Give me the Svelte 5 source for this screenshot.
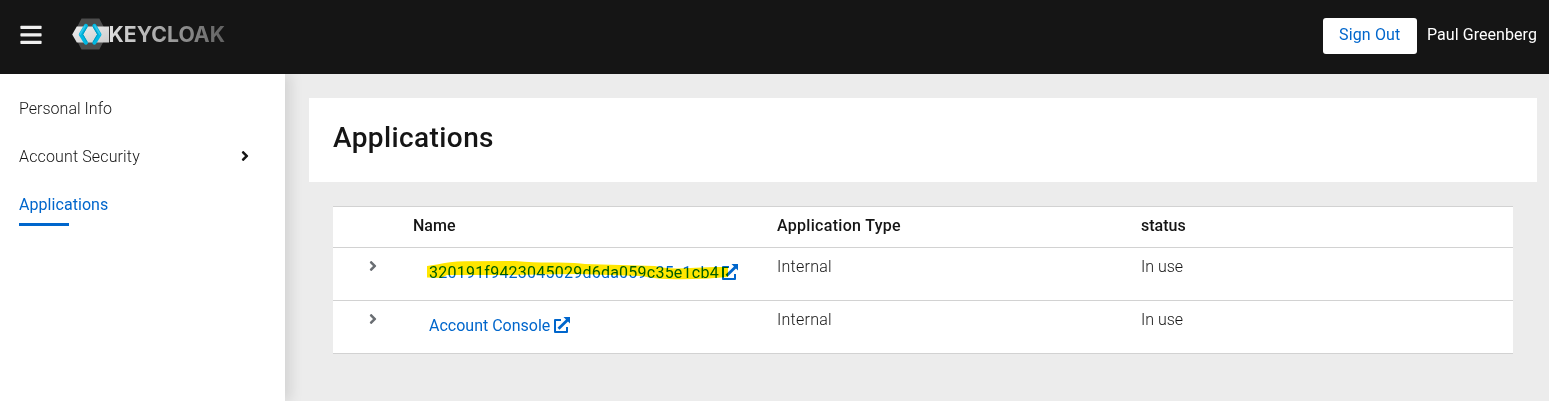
<script>
  const nav = [
    { label: 'Personal Info', cls: 'personal' },
    { label: 'Account Security', cls: 'security', expandable: true },
    { label: 'Applications', cls: 'current' }
  ];
  const apps = [
    { name: '320191f9423045029d6da059c35e1cb4', marked: true },
    { name: 'Account Console', marked: false }
  ];
</script>

{#snippet chevron()}
  <svg class="chevron" viewBox="0 0 256 512" aria-hidden="true">
    <path fill="currentColor" d="M224.3 273l-136 136c-9.4 9.4-24.6 9.4-33.9 0l-22.600-22.600c-9.400-9.400-9.400-24.600 0-33.900l96.400-96.400-96.400-96.400c-9.400-9.400-9.400-24.600 0-33.900L54.300 103c9.400-9.400 24.600-9.400 33.900 0l136 136c9.500 9.400 9.500 24.600.1 34z" />
  </svg>
{/snippet}

<div class="page">
  <header>
    <svg class="bars" viewBox="0 0 22 20" aria-hidden="true">
      <rect x="0.4" y="0.700" width="21.200" height="3.200" rx=".7" fill="#f0f0f0" />
      <rect x="0.4" y="8.200" width="21.200" height="3.200" rx=".7" fill="#f0f0f0" />
      <rect x="0.4" y="15.700" width="21.200" height="3.200" rx=".7" fill="#f0f0f0" />
    </svg>
    <svg class="logo" viewBox="0 0 154 34" role="img" aria-label="Keycloak">
      <defs>
        <linearGradient id="word" gradientUnits="userSpaceOnUse" x1="38" y1="0" x2="153" y2="0">
          <stop offset="0" stop-color="#dedede" />
          <stop offset="1" stop-color="#606060" />
        </linearGradient>
        <linearGradient id="band" x1="0" y1="0" x2="1" y2="1">
          <stop offset="0" stop-color="#ededed" />
          <stop offset="1" stop-color="#cdcdcd" />
        </linearGradient>
      </defs>
      <path fill="#4d4d4d" d="M9.500 1.500h17.800l8.200 15.500-8.200 15.500H9.500L1.500 17z" />
      <path fill="url(#band)" d="M4.800 9.500H37v16H4.800L.2 17.500z" />
      <path fill="none" stroke="#00b8e3" stroke-width="4" stroke-linecap="round" stroke-linejoin="round" d="M13.900 8.800L8.800 17.400l5.100 8.300M22.400 8.800l5.100 8.600-5.100 8.300" />
      <path fill="none" stroke="#33c6e9" stroke-width="1.500" stroke-linecap="round" d="M12.900 9L8 17.300M22.900 8.800l5.100 8.600" />
      <path fill="none" stroke="#009abf" stroke-width="1" d="M15.300 9.600L10.700 17.400l4.400 7.600M21 9.600l4.600 7.800-4.600 7.800" />
      <text x="36.500" y="25.300" textLength="116.500" lengthAdjust="spacingAndGlyphs" fill="url(#word)">KEYCLOAK</text>
    </svg>
    <button><span class="signout">Sign Out</span></button>
    <span class="user">Paul Greenberg</span>
  </header>

  <div class="body">
    <nav>
      {#each nav as item}
        <a href="#top" class={item.cls}>
          <span>{item.label}</span>
          {#if item.expandable}{@render chevron()}{/if}
        </a>
      {/each}
    </nav>
    <main>
      <section class="title"><h1>Applications</h1></section>
      <div class="table">
        <div class="row head">
          <span></span>
          <span class="t-name">Name</span>
          <span class="t-type">Application Type</span>
          <span class="t-status">status</span>
        </div>
        {#each apps as app}
          <div class="row">
            <span class="toggle">{@render chevron()}</span>
            <a class="link" href="#app">
              <span class={app.marked ? 'hash' : 'console'}>{app.name}</span>
              <svg class="external" viewBox="0 0 16 16" aria-hidden="true">
                <path fill="none" stroke="currentColor" stroke-width="2" stroke-linejoin="round" d="M7 3H1v12h12V10" />
                <path fill="currentColor" d="M9.500 0H16v6.500l-2-2-8.500 8.300-2-2L12 2.500z" />
              </svg>
              {#if app.marked}
                <svg class="marker" viewBox="0 0 302 19" preserveAspectRatio="none" aria-hidden="true">
                  <path fill="#ffe600" d="M0 5L10 3.500Q22 .5 38 .3L88 0Q108 1.500 122 1.500Q148 1 158 3L228 5Q236 7 250 7.500L288 6L301 6V16Q270 19 240 18Q226 17.500 215 15L150 13L80 14L20 14L14 17L0 16.500z" />
                </svg>
              {/if}
            </a>
            <span class="internal">Internal</span>
            <span class="inuse">In use</span>
          </div>
        {/each}
      </div>
    </main>
  </div>
</div>

<style>
  :global(body) { margin: 0; }
  .page {
    height: 401px;
    overflow: hidden;
    display: flex;
    flex-direction: column;
    font: 300 16px/24px Roboto, sans-serif;
    color: #151515;
  }
  a { color: inherit; text-decoration: none; }
  span { white-space: nowrap; }
  header {
    position: relative;
    z-index: 2;
    height: 74px;
    flex: none;
    box-sizing: border-box;
    padding: 0 12px 2px 20px;
    display: flex;
    align-items: center;
    background: #151515;
  }
  .bars { width: 22px; height: 20px; margin-top: -2px; }
  .logo { width: 154px; height: 34px; margin: -4px 0 0 30px; }
  .logo text { font: 700 21.500px Inter, sans-serif; }
  button {
    width: 94px;
    height: 36px;
    margin-left: auto;
    padding: 0 0 3px 16px;
    border: 0;
    border-radius: 3px;
    background: #fff;
    color: #06c;
    font: 400 16px/24px Roboto, sans-serif;
    text-align: left;
  }
  .signout { letter-spacing: .15px; }
  .user {
    width: 110px;
    margin: -3px 0 0 10px;
    color: #fff;
    font-weight: 400;
    letter-spacing: .06px;
  }
  .body { flex: 1; display: flex; min-height: 0; }
  nav {
    width: 285px;
    flex: none;
    box-sizing: border-box;
    padding: 11px 0 0 19px;
    background: #fff;
    box-shadow: 6px 0 12px rgba(3, 3, 3, .1);
    z-index: 1;
  }
  nav a {
    height: 48px;
    box-sizing: border-box;
    padding: 12px 35px 0 0;
    display: flex;
    align-items: flex-start;
    justify-content: space-between;
  }
  .personal { letter-spacing: .02px; }
  .security { letter-spacing: .14px; }
  .current { color: #06c; font-weight: 400; letter-spacing: .06px; }
  nav .current {
    width: 50px;
    height: 45px;
    padding-right: 0;
    border-bottom: 3px solid #06c;
  }
  .chevron { width: 10px; height: 16px; }
  nav .chevron { margin-top: 3px; }
  main {
    flex: 1;
    min-width: 0;
    padding: 24px 12px 0 24px;
    background: #ececec;
  }
  .title { height: 84px; box-sizing: border-box; padding: 22px 24px; background: #fff; }
  h1 { margin: 0; font: 500 28px/36px Roboto, sans-serif; letter-spacing: .4px; }
  .table { margin: 24px 24px 0; border-top: 1px solid #d2d2d2; background: #fff; }
  .row {
    display: grid;
    grid-template-columns: 80px 364px 364px 1fr;
    height: 53px;
    box-sizing: border-box;
    padding-top: 7px;
    border-bottom: 1px solid #d2d2d2;
  }
  .head { height: 41px; font-weight: 500; }
  .t-type { letter-spacing: .3px; }
  .internal { letter-spacing: .25px; }
  .toggle { padding: 3px 0 0 35px; color: #6a6e73; }
  .toggle .chevron { display: block; }
  .link {
    position: relative;
    display: flex;
    align-items: flex-start;
    gap: 4px;
    padding: 6px 0 0 16px;
    color: #06c;
    font-weight: 400;
  }
  .external { width: 16px; height: 16px; margin-top: 3px; }
  .marker {
    position: absolute;
    left: 14px;
    top: 6px;
    width: 302px;
    height: 19px;
    mix-blend-mode: multiply;
  }
  .hash { width: 289px; letter-spacing: .235px; }
  .console { width: 121px; }
</style>
